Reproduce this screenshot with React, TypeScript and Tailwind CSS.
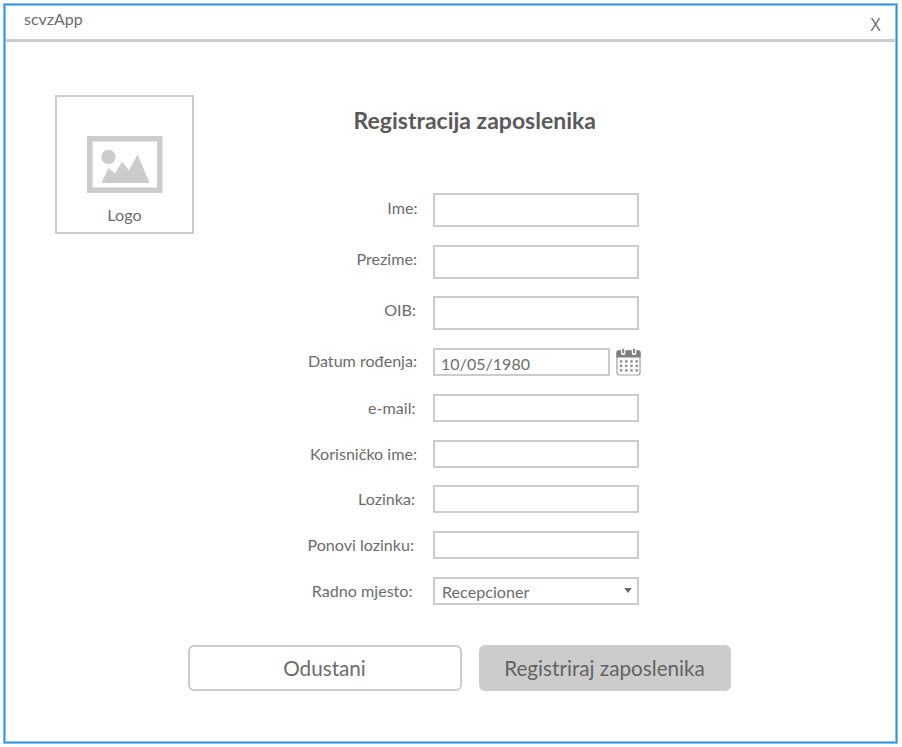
import React from "react";

type Row = {
  label: string;
  row: string;
  labelPos: string;
  kind: "text" | "date" | "select";
};

const rows: Row[] = [
  { label: "Ime:", row: "h-[34px] mb-[18px]", labelPos: "pr-[15.5px] pt-[4px]", kind: "text" },
  { label: "Prezime:", row: "h-[34px] mb-[17px]", labelPos: "pr-[16px] pt-[3px]", kind: "text" },
  { label: "OIB:", row: "h-[34px] mb-[18px]", labelPos: "pr-[17px] pt-[3px]", kind: "text" },
  { label: "Datum rođenja:", row: "h-[28px] mb-[18px]", labelPos: "pr-[16px] pt-[2px]", kind: "date" },
  { label: "e-mail:", row: "h-[28px] mb-[18px]", labelPos: "pr-[17.5px] pt-[3px]", kind: "text" },
  { label: "Korisničko ime:", row: "h-[28px] mb-[17px]", labelPos: "pr-[16px] pt-[3px]", kind: "text" },
  { label: "Lozinka:", row: "h-[28px] mb-[18px]", labelPos: "pr-[18px] pt-[3px]", kind: "text" },
  { label: "Ponovi lozinku:", row: "h-[28px] mb-[18px]", labelPos: "pr-[19px] pt-[3px]", kind: "text" },
  { label: "Radno mjesto:", row: "h-[28px]", labelPos: "pr-[20.5px] pt-[3px]", kind: "select" },
];

const dotColumns = [5, 10.2, 15.4, 20.6];
const dotRows = [12.5, 17, 21.5];

function CalendarIcon() {
  return (
    <svg className="ml-[6px] h-[28px] w-[26px] shrink-0" viewBox="0 0 26 28">
      <rect x="1" y="3" width="23" height="24" rx="2" fill="#fff" stroke="#a0a0a0" strokeWidth="1.2" />
      <path d="M.4 9.5V4.2a2 2 0 0 1 2-2h20.2a2 2 0 0 1 2 2v5.3z" fill="#808080" />
      <path d="M5 1.5v3.4a2.2 2.2 0 0 0 4.4 0V1.5zM15.8 1.5v3.4a2.2 2.2 0 0 0 4.4 0V1.5z" fill="#fff" />
      <path d="M7.2 .8v4.4M18 .8v4.4" stroke="#888" strokeWidth="2" />
      {dotRows.map((y) =>
        dotColumns.map((x) => <rect key={`${x}-${y}`} x={x - 1.1} y={y - 0.3} width="2.4" height="2.4" fill="#8c8c8c" />)
      )}
    </svg>
  );
}

function Field({ kind }: { kind: Row["kind"] }) {
  if (kind === "date") {
    return (
      <div className="flex">
        <div className="flex h-[28px] w-[177px] items-center border-2 border-[#ccc] pt-[4px] pl-[6px] text-[16px] tracking-[0.03px]">
          10/05/1980
        </div>
        <CalendarIcon />
      </div>
    );
  }
  if (kind === "select") {
    return (
      <div className="flex h-full w-[206px] items-center justify-between border-2 border-[#ccc] pr-[5px] pl-[7px] text-[16.15px]">
        <span className="pt-[2px]">Recepcioner</span>
        <svg className="mb-[1px] h-[5px] w-[8px]" viewBox="0 0 8 5">
          <path d="M.3 0h7.4L4 5z" fill="#666" />
        </svg>
      </div>
    );
  }
  return <div className="h-full w-[206px] border-2 border-[#ccc]" />;
}

export default function App() {
  return (
    <div className="h-[747px] w-[902px] bg-white p-[3px] font-['Lato',sans-serif] text-[#6c6c6c]">
      <div className="h-[741px] w-[895px] border border-[#85c0ec] p-[1px] shadow-[inset_0_0_0_1px_#3095dd,inset_0_0_0_2px_#8dc4ed]">
        <header className="mx-[1px] flex h-[37px] justify-between border-b-[3px] border-[#ccc] pr-[14.5px] pl-[18px]">
          <span className="pt-[3px] text-[16px] leading-[22px]">scvzApp</span>
          <span className="pt-[8px] font-['Open_Sans',sans-serif] text-[17.5px] leading-[22px] text-[#6c6c6c]">X</span>
        </header>

        <main>
          <div className="flex h-[151px] pt-[53px] pl-[50px]">
            <div className="flex h-[139px] w-[139px] shrink-0 flex-col items-center border-2 border-[#ccc] pt-[39px]">
              <svg className="h-[57px] w-[76px] shrink-0" viewBox="0 0 76 57">
                <rect x="2.75" y="2.75" width="70" height="51.5" fill="#fff" stroke="#ccc" strokeWidth="5.5" />
                <circle cx="21.5" cy="21" r="7.2" fill="#ccc" />
                <path d="M15 45.5 21.5 32l6.5 5.5 7-12 7 9L50.5 18.5l11.5 27v1.5H15z" fill="#ccc" />
              </svg>
              <span className="mt-[11px] text-[16.2px] leading-[22px]">Logo</span>
            </div>
            <h1 className="ml-[159.5px] pt-[10px] text-[23px] leading-[30px] font-bold text-[#5a5a5a]">Registracija zaposlenika</h1>
          </div>

          <form className="flex flex-col">
            {rows.map((r) => (
              <div key={r.label} className={`flex ${r.row}`}>
                <label className={`w-[428px] shrink-0 text-right text-[16.1px] leading-[22px] ${r.labelPos}`}>{r.label}</label>
                <Field kind={r.kind} />
              </div>
            ))}
          </form>

          <div className="mt-[40px] flex gap-[17px] pl-[182.5px]">
            <button className="h-[46px] w-[274px] rounded-[6px] border-2 border-[#ccc] pt-[2px] text-[20.7px]">Odustani</button>
            <button className="h-[46px] w-[252px] rounded-[6px] bg-[#ccc] pt-[2px] text-[20.7px] text-[#636363]">Registriraj zaposlenika</button>
          </div>
        </main>
      </div>
    </div>
  );
}
